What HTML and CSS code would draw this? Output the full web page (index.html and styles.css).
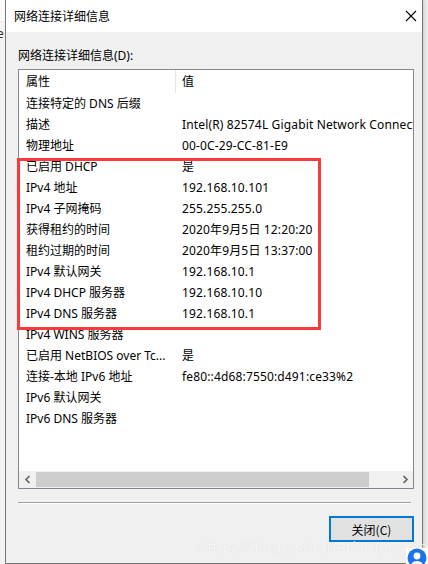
FILE: index.html
```html
<!DOCTYPE html>
<html lang="zh-CN">
<head>
<meta charset="utf-8">
<title>网络连接详细信息</title>
<link rel="stylesheet" href="styles.css">
</head>
<body>
<div class="backdrop">
  <div class="bg-left"><span class="bg-char">e</span></div>
  <div class="window">
    <div class="titlebar">
      <span class="title">网络连接详细信息</span>
      <span class="close">
        <svg width="12" height="12" viewBox="0 0 12 12"><path d="M1 1 L11 11 M11 1 L1 11" stroke="#000" stroke-width="1.1" fill="none"/></svg>
      </span>
    </div>
    <div class="content">
      <div class="label">网络连接详细信息(D):</div>
      <div class="list">
        <div class="header">
          <div class="hcell prop">属性</div>
          <div class="hcell val">值</div>
        </div>
        <div class="rows">
          <div class="row"><span class="prop">连接特定的 DNS 后缀</span><span class="val"></span></div>
          <div class="row"><span class="prop">描述</span><span class="val">Intel(R) 82574L Gigabit Network Connection</span></div>
          <div class="row"><span class="prop">物理地址</span><span class="val">00-0C-29-CC-81-E9</span></div>
          <div class="row"><span class="prop">已启用 DHCP</span><span class="val">是</span></div>
          <div class="row"><span class="prop">IPv4 地址</span><span class="val">192.168.10.101</span></div>
          <div class="row"><span class="prop">IPv4 子网掩码</span><span class="val">255.255.255.0</span></div>
          <div class="row"><span class="prop">获得租约的时间</span><span class="val">2020年9月5日 12:20:20</span></div>
          <div class="row"><span class="prop">租约过期的时间</span><span class="val">2020年9月5日 13:37:00</span></div>
          <div class="row"><span class="prop">IPv4 默认网关</span><span class="val">192.168.10.1</span></div>
          <div class="row"><span class="prop">IPv4 DHCP 服务器</span><span class="val">192.168.10.10</span></div>
          <div class="row"><span class="prop">IPv4 DNS 服务器</span><span class="val">192.168.10.1</span></div>
          <div class="row"><span class="prop">IPv4 WINS 服务器</span><span class="val"></span></div>
          <div class="row"><span class="prop">已启用 NetBIOS over Tc...</span><span class="val">是</span></div>
          <div class="row"><span class="prop">连接-本地 IPv6 地址</span><span class="val">fe80::4d68:7550:d491:ce33%2</span></div>
          <div class="row"><span class="prop">IPv6 默认网关</span><span class="val"></span></div>
          <div class="row"><span class="prop">IPv6 DNS 服务器</span><span class="val"></span></div>
        </div>
        <div class="hscroll">
          <span class="arrow">
            <svg width="8" height="9" viewBox="0 0 8 9"><path d="M5.5 1 L2 4.5 L5.5 8" stroke="#606060" stroke-width="1.6" fill="none"/></svg>
          </span>
          <span class="track"><span class="thumb"></span></span>
          <span class="arrow">
            <svg width="8" height="9" viewBox="0 0 8 9"><path d="M2.5 1 L6 4.5 L2.5 8" stroke="#606060" stroke-width="1.6" fill="none"/></svg>
          </span>
        </div>
      </div>
      <div class="separator"></div>
      <div class="actions">
        <button class="btn">关闭(C)</button>
      </div>
    </div>
  </div>
  <div class="highlight"></div>
  <div class="watermark">https://blog.csdn.net/empty_csy</div>
  <div class="avatar">
    <svg width="20" height="16" viewBox="0 0 20 16"><circle cx="10" cy="10" r="9.5" fill="#1a73e8"/><circle cx="10" cy="8" r="3.4" fill="#fff"/><path d="M4.5 16 C5.5 12 14.5 12 15.5 16 Z" fill="#fff"/></svg>
  </div>
</div>
</body>
</html>
```
FILE: styles.css
```css
html, body {
  margin: 0;
  padding: 0;
}
body {
  width: 428px;
  height: 564px;
  overflow: hidden;
  background: #f0f0f0;
  font-family: "Noto Sans", "Noto Sans CJK SC", sans-serif;
  font-size: 12px;
  color: #000;
}
.backdrop {
  position: relative;
  width: 428px;
  height: 564px;
  display: flex;
  background: #ededed;
}
.bg-left {
  width: 5px;
  position: relative;
  background: linear-gradient(#fafafa 0 21px, #e8e8e8 21px 22px, #f3f3f3 22px);
  overflow: hidden;
}
.bg-char {
  position: absolute;
  left: -3px;
  top: 25px;
  font-size: 12px;
  color: #333;
}
.window {
  width: 416px;
  height: 563px;
  border-left: 1px solid #777;
  border-right: 1px solid #777;
  border-bottom: 1px solid #777;
  background: #f0f0f0;
  display: flex;
  flex-direction: column;
  box-shadow: 0 0 4px rgba(0,0,0,0.25);
}
.titlebar {
  height: 32px;
  background: #fff;
  display: flex;
  align-items: center;
  justify-content: space-between;
  padding-left: 8px;
  padding-right: 5px;
}
.title {
  font-family: "Noto Sans CJK SC", sans-serif;
  font-size: 12px;
  line-height: 16px;
}
.close {
  width: 12px;
  height: 12px;
  display: flex;
}
.content {
  flex: 1;
  display: flex;
  flex-direction: column;
  padding: 15px 8px 0 12px;
}
.label {
  line-height: 18px;
  height: 18px;
  margin-bottom: 4px;
}
.list {
  width: 394px;
  height: 418px;
  border: 1px solid #828790;
  background: #fff;
  display: flex;
  flex-direction: column;
  overflow: hidden;
}
.header {
  height: 23px;
  display: flex;
  flex-shrink: 0;
}
.hcell {
  line-height: 23px;
  white-space: nowrap;
}
.hcell.prop {
  width: 149px;
  padding-left: 7px;
  border-right: 1px solid #e5e5e5;
}
.hcell.val {
  padding-left: 6px;
}
.rows {
  flex: 1;
  overflow: hidden;
}
.row {
  height: 21px;
  line-height: 21px;
  display: flex;
  white-space: nowrap;
}
.row .prop {
  width: 150px;
  padding-left: 7px;
  flex-shrink: 0;
  overflow: hidden;
}
.row .val {
  padding-left: 6px;
  white-space: nowrap;
  letter-spacing: 0.15px;
}
.hscroll {
  height: 17px;
  flex-shrink: 0;
  display: flex;
  background: #f0f0f0;
}
.arrow {
  width: 17px;
  height: 17px;
  display: flex;
  align-items: center;
  justify-content: center;
}
.track {
  flex: 1;
  display: flex;
  align-items: center;
}
.thumb {
  width: 333px;
  height: 15px;
  background: #cdcdcd;
}
.separator {
  margin-top: 13px;
  width: 393px;
  height: 1px;
  background: #a0a0a0;
  border-bottom: 1px solid #fff;
}
.actions {
  display: flex;
  justify-content: flex-end;
  padding-top: 12px;
}
.btn {
  width: 85px;
  height: 26px;
  border: 2px solid #0078d7;
  background: #e1e1e1;
  font-family: "Noto Sans CJK SC", sans-serif;
  font-size: 12px;
  color: #000;
  padding: 0;
  margin: 0;
}
.highlight {
  position: absolute;
  left: 17px;
  top: 158px;
  width: 298px;
  height: 166px;
  border: 3px solid #f73b3b;
}
.watermark {
  position: absolute;
  left: 198px;
  top: 538px;
  font-family: "Liberation Sans", Arial, sans-serif;
  font-size: 17px;
  color: rgba(255,255,255,0.75);
  text-shadow: 0 0 1px rgba(0,0,0,0.12);
  white-space: nowrap;
}
.avatar {
  position: absolute;
  left: 406px;
  top: 548px;
  width: 22px;
  height: 16px;
  background: #fff;
  display: flex;
  align-items: flex-end;
  justify-content: center;
}
```
